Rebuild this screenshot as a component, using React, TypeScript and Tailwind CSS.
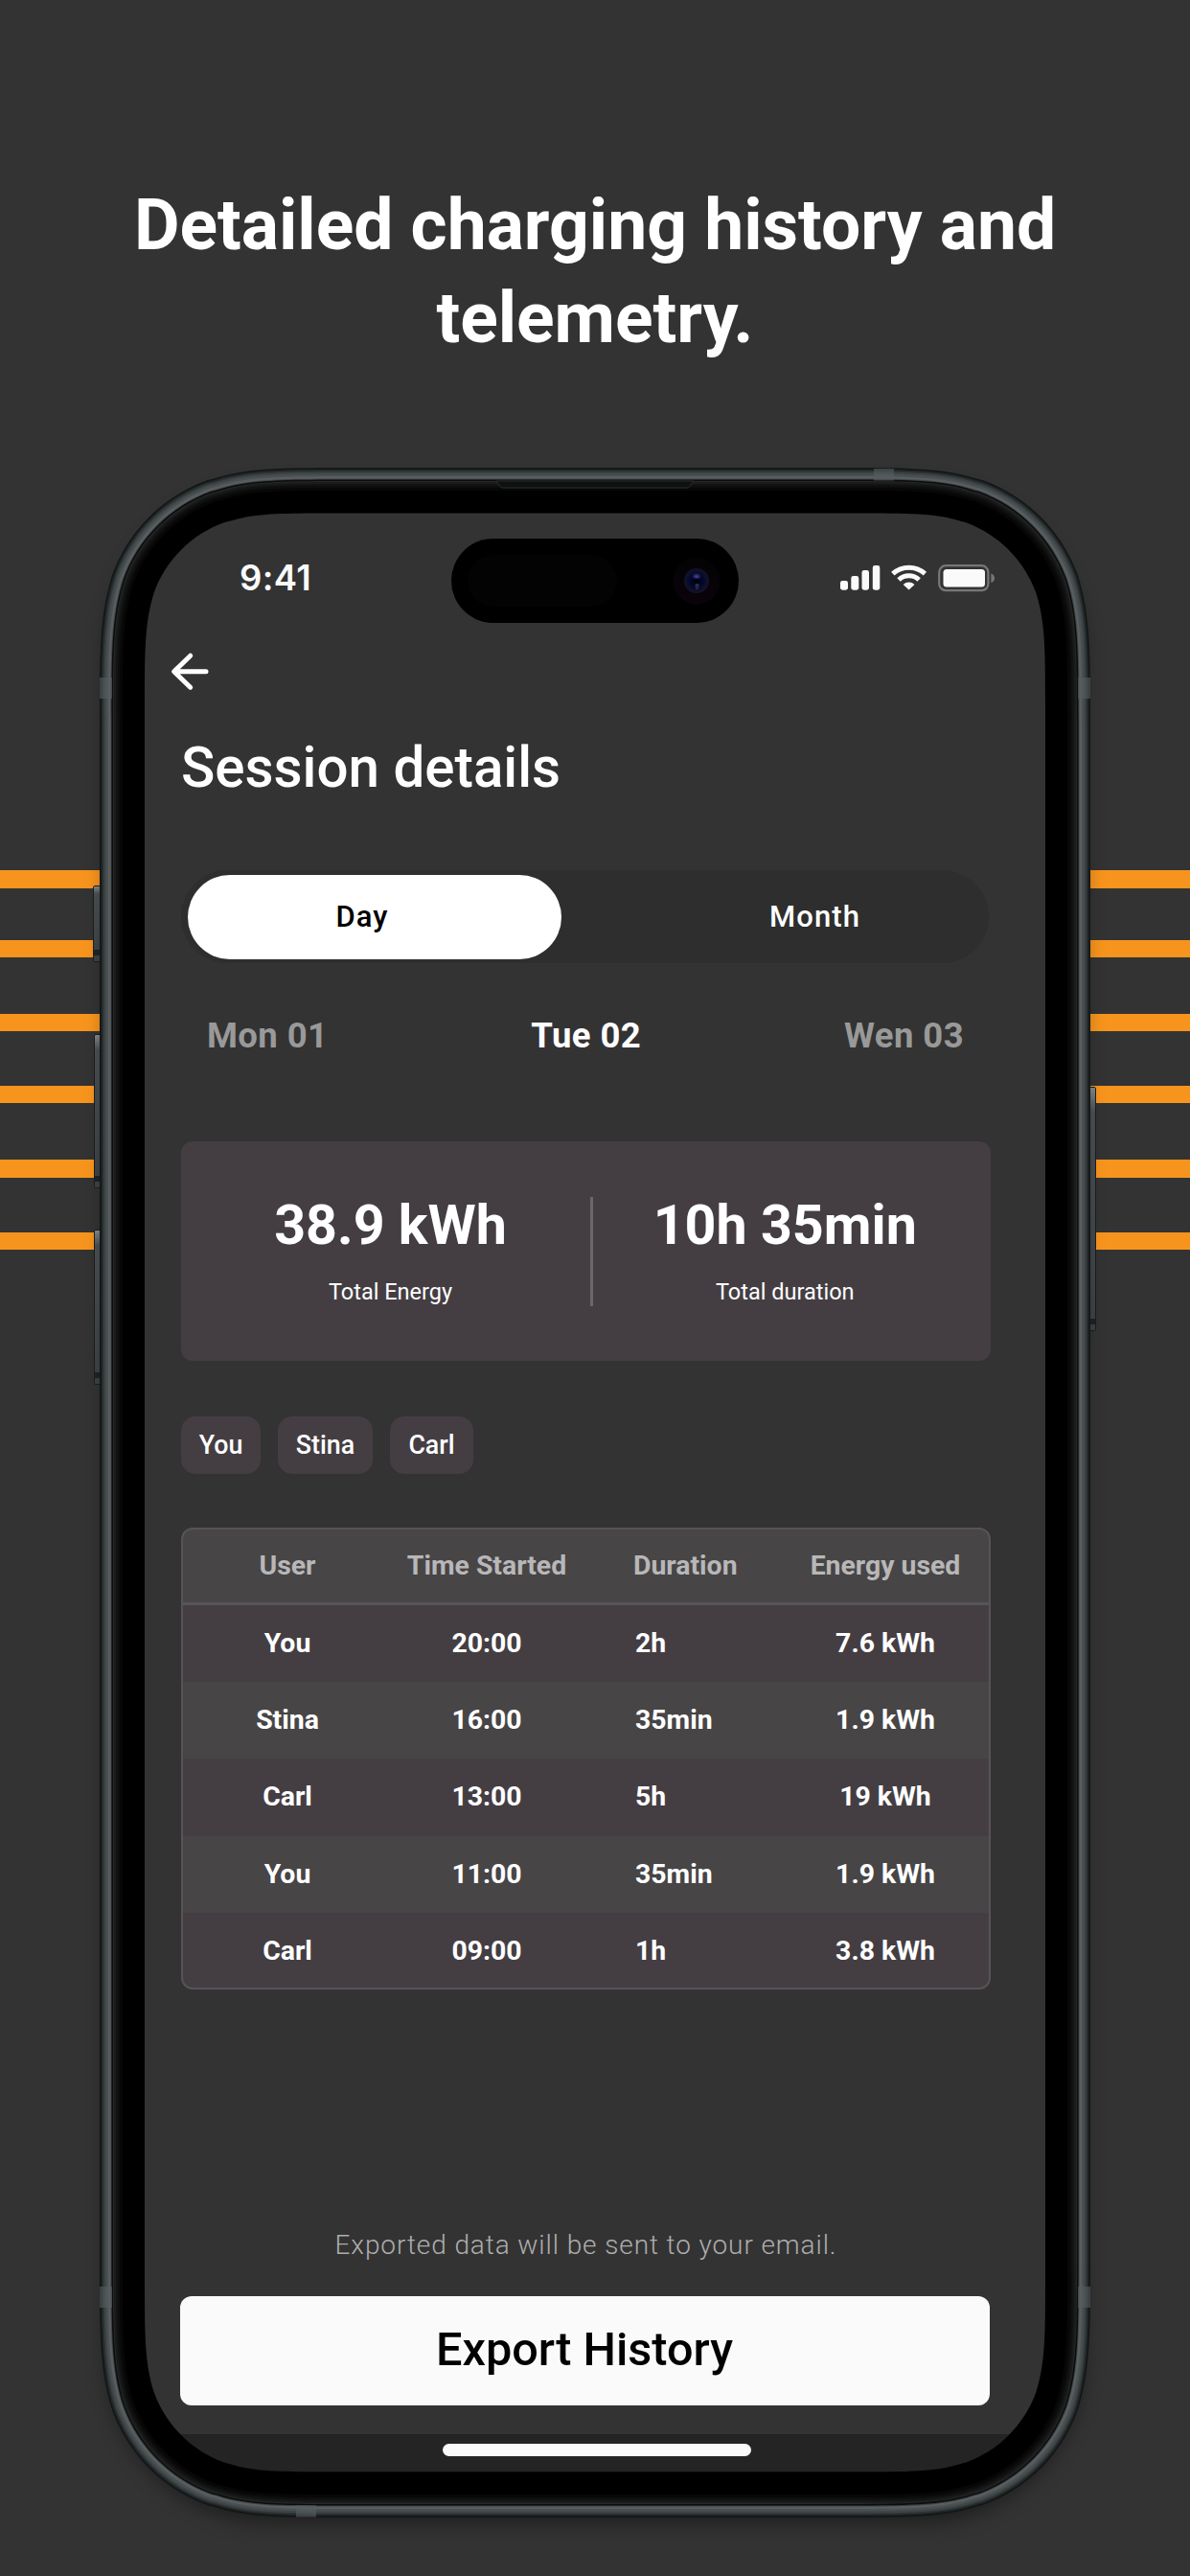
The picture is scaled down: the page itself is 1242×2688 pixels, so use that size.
import React from "react";
import clsx from "clsx";

const STRIPES = [
  "top-[908px]",
  "top-[980.5px]",
  "top-[1057.5px]",
  "top-[1132.5px]",
  "top-[1210px]",
  "top-[1285.5px]",
];

const DAYS = [
  { label: "Mon 01", active: false },
  { label: "Tue 02", active: true },
  { label: "Wen 03", active: false },
];

const USERS = [
  { name: "You", width: "w-[83px]" },
  { name: "Stina", width: "w-[99px]" },
  { name: "Carl", width: "w-[87px]" },
];

const SESSIONS = [
  { user: "You", start: "20:00", duration: "2h", energy: "7.6 kWh" },
  { user: "Stina", start: "16:00", duration: "35min", energy: "1.9 kWh" },
  { user: "Carl", start: "13:00", duration: "5h", energy: "19 kWh" },
  { user: "You", start: "11:00", duration: "35min", energy: "1.9 kWh" },
  { user: "Carl", start: "09:00", duration: "1h", energy: "3.8 kWh" },
];

// Rim and bezel shades, from the outer edge inwards
const RIM = [
  { inset: 0, fill: "#121616" },
  { inset: 1.5, fill: "#202526" },
  { inset: 3, fill: "#2f3536" },
  { inset: 4.5, fill: "#3e4445" },
  { inset: 6.5, fill: "#4a5051" },
  { inset: 9, fill: "#585e5f" },
  { inset: 11.5, fill: "#3c4142" },
  { inset: 12.5, fill: "#0b0d0d" },
  { inset: 14, fill: "#262828" },
  { inset: 15, fill: "#1a1b1b" },
  { inset: 17, fill: "#131313" },
  { inset: 19, fill: "#0d0d0d" },
  { inset: 21, fill: "#070707" },
  { inset: 24, fill: "#000000" },
];

// Rounded rectangle with continuous corners
function smoothRect(x: number, y: number, w: number, h: number, r: number) {
  const corner = [
    [1.528665, 0],
    [1.088493, 0],
    [0.868407, 0],
    [0.669934, 0.065496],
    [0.631494, 0.074911],
    [0.372824, 0.169059],
    [0.169059, 0.372824],
    [0.074911, 0.631494],
    [0, 0.868407],
    [0, 1.088493],
    [0, 1.528665],
  ];
  const put = (pts: number[][], fx: boolean, fy: boolean) =>
    pts.map(([a, b]) => `${(fx ? x + w - a * r : x + a * r).toFixed(2)} ${(fy ? y + h - b * r : y + b * r).toFixed(2)}`);
  const draw = (p: string[]) =>
    `${p[0]}C${p[1]} ${p[2]} ${p[3]}L${p[4]}C${p[5]} ${p[6]} ${p[7]}C${p[8]} ${p[9]} ${p[10]}`;
  const back = [...corner].reverse();
  const drawBack = (p: string[]) =>
    `${p[0]}C${p[1]} ${p[2]} ${p[3]}C${p[4]} ${p[5]} ${p[6]}L${p[7]}C${p[8]} ${p[9]} ${p[10]}`;
  return `M${draw(put(corner, true, false))}L${drawBack(put(back, true, true))}L${draw(put(corner, false, true))}L${drawBack(put(back, false, false))}Z`;
}

function SideButton({ className }: { className: string }) {
  return (
    <div className={clsx("absolute overflow-hidden rounded-[2px] border border-[#1b1f20]", className)}>
      <div className="h-full w-full bg-linear-to-b from-[#868b8c] via-[#4b5052] via-10% to-[#3d4244]" />
      <div className="absolute inset-x-0 bottom-[6px] h-[6px] bg-[#202324]" />
    </div>
  );
}

function PhoneFrame() {
  const hole = smoothRect(47, 47.5, 940, 2043.8, 131);
  return (
    <svg className="pointer-events-none absolute inset-0" width="1034" height="2139" viewBox="0 0 1034 2139">
      <defs>
        <mask id="screen-hole">
          <rect width="1034" height="2139" fill="#fff" />
          <path d={hole} fill="#000" />
        </mask>
      </defs>
      <g mask="url(#screen-hole)">
        {RIM.map(({ inset, fill }) => (
          <path key={inset} d={smoothRect(inset, inset, 1034 - inset * 2, 2139 - inset * 2, 177 - inset)} fill={fill} />
        ))}
        {/* Speaker slot */}
        <path d="M414 14H620L616 19.5Q615 21 613 21H421Q419 21 418 19.5Z" fill="#0f1010" stroke="#2c2e2e" />
      </g>
      {/* Antenna lines */}
      <g fill="#565d5f" fillOpacity="0.6">
        <rect x="0" y="219" width="13" height="22" />
        <rect x="1021" y="219" width="13" height="22" />
        <rect x="0" y="1898" width="13" height="22" />
        <rect x="1021" y="1898" width="13" height="22" />
        <rect x="808" y="1" width="21" height="12.5" />
        <rect x="205" y="2126" width="21" height="12.5" />
      </g>
    </svg>
  );
}

function DynamicIsland() {
  return (
    <div className="absolute top-[27px] left-[320px] h-[88px] w-[300px] rounded-full bg-black">
      <div className="absolute top-[17px] left-[17px] h-[54px] w-[156px] rounded-full bg-[#030303]" />
      <svg className="absolute top-[18px] left-[230px]" width="52" height="52" viewBox="0 0 52 52">
        <defs>
          <linearGradient id="lens-ring" x1="0" y1="0" x2="0" y2="1">
            <stop offset="0" stopColor="#030303" />
            <stop offset="1" stopColor="#0b030b" />
          </linearGradient>
          <radialGradient id="lens">
            <stop offset="0" stopColor="#02020c" />
            <stop offset="0.45" stopColor="#030334" />
            <stop offset="0.65" stopColor="#0a0b24" />
            <stop offset="1" stopColor="#12132e" />
          </radialGradient>
          <radialGradient id="glint">
            <stop offset="0" stopColor="#4a4a9a" />
            <stop offset="1" stopColor="#4a4a9a" stopOpacity="0" />
          </radialGradient>
        </defs>
        <circle cx="26" cy="26" r="24.5" fill="url(#lens-ring)" />
        <circle cx="26" cy="26" r="13" fill="url(#lens)" />
        <ellipse cx="26" cy="21.5" rx="5" ry="3.5" fill="url(#glint)" />
        <circle cx="26" cy="26.5" r="2.5" fill="#010106" />
        <circle cx="26.5" cy="31" r="2.2" fill="#0f3b44" />
        <circle cx="26.5" cy="33.8" r="1.8" fill="#3c164a" />
      </svg>
    </div>
  );
}

function StatusBar() {
  return (
    <div className="relative h-[115px]">
      <span className="absolute top-[46px] left-[99px] font-['Inter',sans-serif] text-[36.5px] leading-[44px] font-semibold tracking-[0.4px] text-[#fafafa]">
        9:41
      </span>
      <DynamicIsland />
      <svg className="absolute top-[54px] left-[725px]" width="164" height="30" viewBox="0 0 164 30" fill="#fafafa">
        <rect x="1" y="17" width="8" height="9.7" rx="2.4" />
        <rect x="12.3" y="12" width="8" height="14.7" rx="2.4" />
        <rect x="23.5" y="6" width="7.5" height="20.7" rx="2.4" />
        <rect x="34.8" y="1" width="7.5" height="25.7" rx="2.4" />
        <g fill="none" stroke="#fafafa" strokeWidth="5">
          <path d="M55.8 9.7A25 25 0 0 1 89.4 9.7" />
          <path d="M62 16A15.6 15.6 0 0 1 83.2 16" />
        </g>
        <path d="M72.6 26.6L66.7 20.9A8.6 8.6 0 0 1 78.5 20.9Z" />
        <rect x="104.2" y="1.2" width="51.2" height="26" rx="7" fill="none" stroke="#777777" strokeWidth="2.2" />
        <rect x="108.5" y="5" width="43.5" height="18.4" rx="3.5" />
        <path d="M158.4 9.4Q162 10.8 162 14.2T158.4 19Z" fill="#777777" />
      </svg>
    </div>
  );
}

function SessionTable() {
  return (
    <div className="relative mt-[56px] overflow-hidden rounded-[12px] text-[28.4px] leading-[36px] font-bold">
      <div className="grid h-[81px] grid-cols-[222px_194px_209px_220px] items-center border-b-[3px] border-[#575557] bg-[#474546] pt-[2px] text-center text-[#b8b7b8]">
        <span>User</span>
        <span>Time Started</span>
        <span className="pl-[56px] text-left">Duration</span>
        <span>Energy used</span>
      </div>
      {SESSIONS.map((s, i) => (
        <div
          key={s.start}
          className={clsx(
            "grid h-[80.2px] grid-cols-[222px_194px_209px_220px] items-center text-center text-white",
            i % 2 ? "bg-[#474546]" : "bg-[#443e43]"
          )}
        >
          <span>{s.user}</span>
          <span>{s.start}</span>
          <span className="pl-[58px] text-left">{s.duration}</span>
          <span>{s.energy}</span>
        </div>
      ))}
      <div className="pointer-events-none absolute inset-0 rounded-[12px] border-2 border-[#575357]" />
    </div>
  );
}

export default function App() {
  return (
    <div className="relative h-[2688px] w-[1242px] overflow-hidden bg-[#333333] font-['Roboto',sans-serif] text-white">
      {STRIPES.map((top) => (
        <div key={top} className={clsx("absolute inset-x-0 h-[18.5px] bg-[#f7941d]", top)} />
      ))}

      <h1 className="relative pt-[187px] text-center text-[73.2px] leading-[97px] font-bold">
        Detailed charging history and
        <br />
        telemetry.
      </h1>

      <div className="relative mx-auto mt-[107px] h-[2139px] w-[1034px] px-[47px] py-[47px]">
        <SideButton className="top-[436px] left-[-7px] h-[80px] w-[9px]" />
        <SideButton className="top-[591px] left-[-6px] h-[161px] w-[8px]" />
        <SideButton className="top-[795px] left-[-6px] h-[162px] w-[8px]" />
        <SideButton className="top-[646px] right-[-6px] h-[255px] w-[8px]" />
        <div className="absolute inset-[6px] rounded-[172px] shadow-[0_12px_20px_rgba(0,0,0,0.4)]" />

        <div className="relative flex h-[2045px] w-[940px] flex-col overflow-hidden rounded-[100px] bg-[#333333]">
          <StatusBar />

          <div className="flex flex-1 flex-col pr-[57px] pl-[38px]">
            <svg
              className="mt-[30px] ml-[-14px]"
              width="48"
              height="42"
              viewBox="0 0 48 42"
              fill="none"
              stroke="#ffffff"
              strokeWidth="5"
              strokeLinecap="round"
              strokeLinejoin="round"
            >
              <path d="M40 20.7H7M23.7 4.2L6.6 20.7L23.7 37.2" />
            </svg>

            <h2 className="mt-[47px] text-[58.3px] leading-[64px] font-medium">Session details</h2>

            <div className="mt-[75px] flex h-[97px] w-[843px] items-center rounded-full bg-[#2e2e2e] px-[7px] text-[31px] leading-[40px] font-medium tracking-[1.1px]">
              <button className="h-[88px] w-[390px] rounded-full bg-white pr-[26px] text-black">Day</button>
              <button className="flex-1 pl-[90px] text-white">Month</button>
            </div>

            <div className="mt-[54px] flex justify-between pr-[28px] pl-[27px] text-[36.5px] leading-[44px] font-bold tracking-[0.4px]">
              {DAYS.map((d) => (
                <span key={d.label} className={d.active ? "text-white" : "text-[#999999]"}>
                  {d.label}
                </span>
              ))}
            </div>

            <div className="mt-[88px] flex h-[229px] rounded-[12px] bg-[#443e43] pt-[58px] text-center">
              <div className="w-[427px] pl-[10px]">
                <p className="text-[57.4px] leading-[60px] font-bold">38.9 kWh</p>
                <p className="mt-[25px] text-[23.5px] leading-[28px]">Total Energy</p>
              </div>
              <div className="h-[114px] w-[2.5px] bg-[#6b666b]" />
              <div className="flex-1 pr-[14px]">
                <p className="text-[57.4px] leading-[60px] font-bold">10h 35min</p>
                <p className="mt-[25px] text-[23.5px] leading-[28px]">Total duration</p>
              </div>
            </div>

            <div className="mt-[58px] flex gap-[18px] text-[26.8px] font-medium">
              {USERS.map((u) => (
                <button key={u.name} className={clsx("h-[60px] rounded-[15px] bg-[#443e43]", u.width)}>
                  {u.name}
                </button>
              ))}
            </div>

            <SessionTable />

            <p className="mt-[249px] text-center text-[28px] leading-[36px] font-light tracking-[0.9px] text-[#adadad]">
              Exported data will be sent to your email.
            </p>
            <button className="mt-[35px] ml-[-1.5px] h-[114px] w-[845px] rounded-[12px] bg-[#fafafa] text-[48.6px] font-medium text-black">
              Export History
            </button>
          </div>

          <div className="flex h-[40px] justify-center bg-[#242424] pt-[10px] pl-[3px]">
            <div className="h-[12.5px] w-[322px] rounded-full bg-[#fafafa]" />
          </div>
        </div>

        <PhoneFrame />
      </div>
    </div>
  );
}
